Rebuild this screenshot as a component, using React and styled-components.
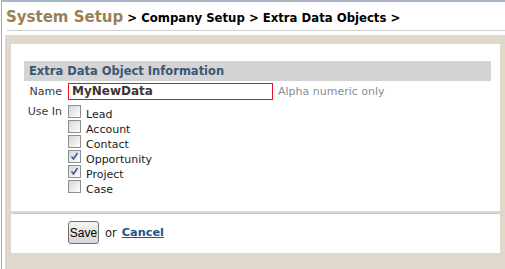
import React from "react";
import styled, { createGlobalStyle } from "styled-components";

const GlobalStyle = createGlobalStyle`
  html, body {
    margin: 0;
    padding: 0;
    background: #fff;
  }
  body {
    font-family: "DejaVu Sans", Verdana, sans-serif;
    font-size: 11px;
    color: #222;
  }
`;

const Page = styled.div`
  width: 505px;
  height: 269px;
  padding-left: 1px;
  box-sizing: border-box;
  overflow: hidden;
`;

const Frame = styled.div`
  height: 100%;
  border-left: 1px solid #a9a9a9;
  border-top: 2px solid #a9b6c6;
  box-sizing: border-box;
  display: flex;
  flex-direction: column;
`;

const Header = styled.div`
  padding: 6px 0 0 4px;
  height: 22px;
  display: flex;
  align-items: baseline;
  white-space: nowrap;
`;

const Title = styled.span`
  font-weight: bold;
  font-size: 15px;
  color: #9c7f55;
`;

const Crumbs = styled.span`
  font-weight: bold;
  font-size: 11.7px;
  color: #000;
  margin-left: 4px;
`;

const Rule = styled.div`
  margin-left: 5px;
  border-top: 1px solid #cfcfcf;
`;

const Shell = styled.div`
  flex: 1;
  margin: 4px 0 0 3px;
  background: #e0d8cb;
  padding: 9px 5px 0 6px;
  display: flex;
  flex-direction: column;
`;

const Panel = styled.div`
  background: #fff;
  padding: ${(p) => p.$pad};
  height: ${(p) => p.$h}px;
  box-sizing: border-box;
  border-top: ${(p) => (p.$divided ? "1px solid #cbc6d2" : "none")};
  margin-top: ${(p) => (p.$divided ? "2px" : "0")};
`;

const SectionBar = styled.div`
  background: #d4d4d4;
  height: 20px;
  line-height: 21px;
  padding-left: 5px;
  font-weight: bold;
  font-size: 11.5px;
  color: #3b5676;
`;

const Form = styled.div`
  display: grid;
  grid-template-columns: 38px 1fr;
  column-gap: 6px;
  margin-top: 2px;
`;

const Label = styled.div`
  text-align: right;
  color: #3a3a3a;
  padding-top: ${(p) => p.$top || 0}px;
  line-height: ${(p) => p.$lh || 15}px;
`;

const NameRow = styled.div`
  display: flex;
  align-items: center;
  gap: 5px;
  height: 17px;
`;

const TextBox = styled.div`
  width: 205px;
  height: 17px;
  box-sizing: border-box;
  border: 1px solid #e8141c;
  padding-left: 3px;
  font-weight: bold;
  font-size: 12px;
  line-height: 15px;
  color: #3d3434;
`;

const Hint = styled.span`
  color: #8b8b9b;
`;

const Checks = styled.div`
  margin-top: 5px;
  display: flex;
  flex-direction: column;
`;

const CheckRow = styled.label`
  display: flex;
  align-items: flex-start;
  height: 15px;
  gap: 5px;
`;

const Box = styled.span`
  width: 13px;
  height: 13px;
  box-sizing: border-box;
  border: 1px solid #8e8f8f;
  background: linear-gradient(135deg, #d6d6d6 0%, #f2f2f2 70%, #fff 100%);
  display: flex;
  align-items: center;
  justify-content: center;
`;

const CheckText = styled.span`
  font-size: 11px;
  line-height: 13px;
  padding-top: 3px;
  color: #1a1a1a;
`;

const Actions = styled.div`
  display: flex;
  align-items: center;
  padding-left: 57px;
  gap: 6px;
`;

const SaveButton = styled.button`
  width: 31px;
  height: 23px;
  padding: 0;
  border: 1px solid #707070;
  border-radius: 3px;
  background: linear-gradient(#f4f4f4, #e4e4e4 50%, #d6d6d6);
  font-family: "Liberation Sans", Arial, sans-serif;
  font-size: 12px;
  color: #000;
`;

const Or = styled.span`
  font-size: 11.5px;
  color: #222;
`;

const CancelLink = styled.a`
  font-weight: bold;
  font-size: 11.3px;
  color: #23538a;
  text-decoration: underline;
  margin-left: -1px;
`;

const Tick = () => (
  <svg width="9" height="9" viewBox="0 0 9 9">
    <path d="M1.5 4.5 L3.5 7 L7.5 1" fill="none" stroke="#3a5aa8" strokeWidth="1.6" />
  </svg>
);

const items = [
  { name: "Lead", on: false },
  { name: "Account", on: false },
  { name: "Contact", on: false },
  { name: "Opportunity", on: true },
  { name: "Project", on: true },
  { name: "Case", on: false },
];

export default function App() {
  return (
    <Page>
      <GlobalStyle />
      <Frame>
        <Header>
          <Title>System Setup</Title>
          <Crumbs>&gt; Company Setup &gt; Extra Data Objects &gt;</Crumbs>
        </Header>
        <Rule />
        <Shell>
          <Panel $pad="17px 9px 0 13px" $h={167}>
            <SectionBar>Extra Data Object Information</SectionBar>
            <Form>
              <Label $lh={17}>Name</Label>
              <NameRow>
                <TextBox>MyNewData</TextBox>
                <Hint>Alpha numeric only</Hint>
              </NameRow>
              <Label $top={4}>Use In</Label>
              <Checks>
                {items.map((it) => (
                  <CheckRow key={it.name}>
                    <Box>{it.on && <Tick />}</Box>
                    <CheckText>{it.name}</CheckText>
                  </CheckRow>
                ))}
              </Checks>
            </Form>
          </Panel>
          <Panel $pad="7px 0 0 0" $h={40} $divided>
            <Actions>
              <SaveButton>Save</SaveButton>
              <Or>or</Or>
              <CancelLink href="#">Cancel</CancelLink>
            </Actions>
          </Panel>
        </Shell>
      </Frame>
    </Page>
  );
}
